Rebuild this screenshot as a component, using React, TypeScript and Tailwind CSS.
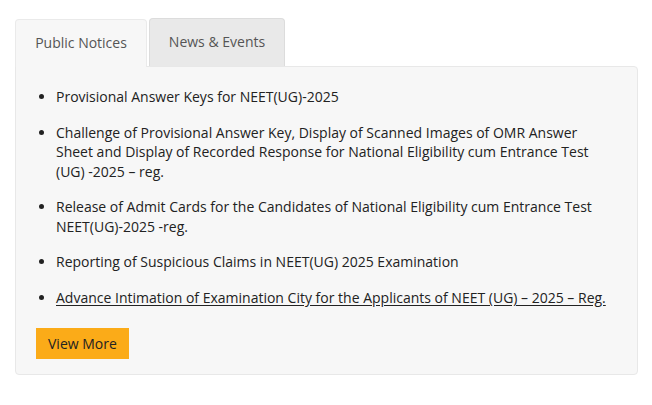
import React from "react";

const notices = [
  { text: "Provisional Answer Keys for NEET(UG)-2025" },
  {
    text: "Challenge of Provisional Answer Key, Display of Scanned Images of OMR Answer Sheet and Display of Recorded Response for National Eligibility cum Entrance Test (UG) -2025 – reg.",
  },
  {
    text: "Release of Admit Cards for the Candidates of National Eligibility cum Entrance Test NEET(UG)-2025 -reg.",
  },
  { text: "Reporting of Suspicious Claims in NEET(UG) 2025 Examination" },
  {
    text: "Advance Intimation of Examination City for the Applicants of NEET (UG) – 2025 – Reg.",
    link: true,
  },
];

export default function App() {
  return (
    <div className="bg-white w-[652px] h-[405px] pt-[18px] pl-[15px] font-['Open_Sans',sans-serif] text-[14px]">
      <div className="w-[623px]">
        <div className="flex gap-[2px]">
          <button className="w-[132px] h-[48px] pb-[2px] bg-[#f7f7f7] border border-b-0 border-[#eaeaea] rounded-t-[4px] text-[#555] relative top-[1px] z-10">
            Public Notices
          </button>
          <button className="w-[136px] h-[48px] pb-[2px] bg-[#e9e9e9] border border-b-0 border-[#dcdcdc] rounded-t-[4px] text-[#555]">
            News &amp; Events
          </button>
        </div>
        <div className="bg-[#f7f7f7] border border-[#e8e8e8] rounded-b-[4px] rounded-tr-[4px] px-5 pt-[20px] pb-[15px]">
          <ul className="list-disc pl-[20px] text-[#222] leading-[19.5px]">
            {notices.map((n, i) => (
              <li key={i} className="mb-4">
                {n.link ? (
                  <a href="#" className="underline underline-offset-2">
                    {n.text}
                  </a>
                ) : (
                  n.text
                )}
              </li>
            ))}
          </ul>
          <button className="mt-[5px] bg-[#fbab18] text-[#222] px-3 h-[31px] leading-[31px]">
            View More
          </button>
        </div>
      </div>
    </div>
  );
}
